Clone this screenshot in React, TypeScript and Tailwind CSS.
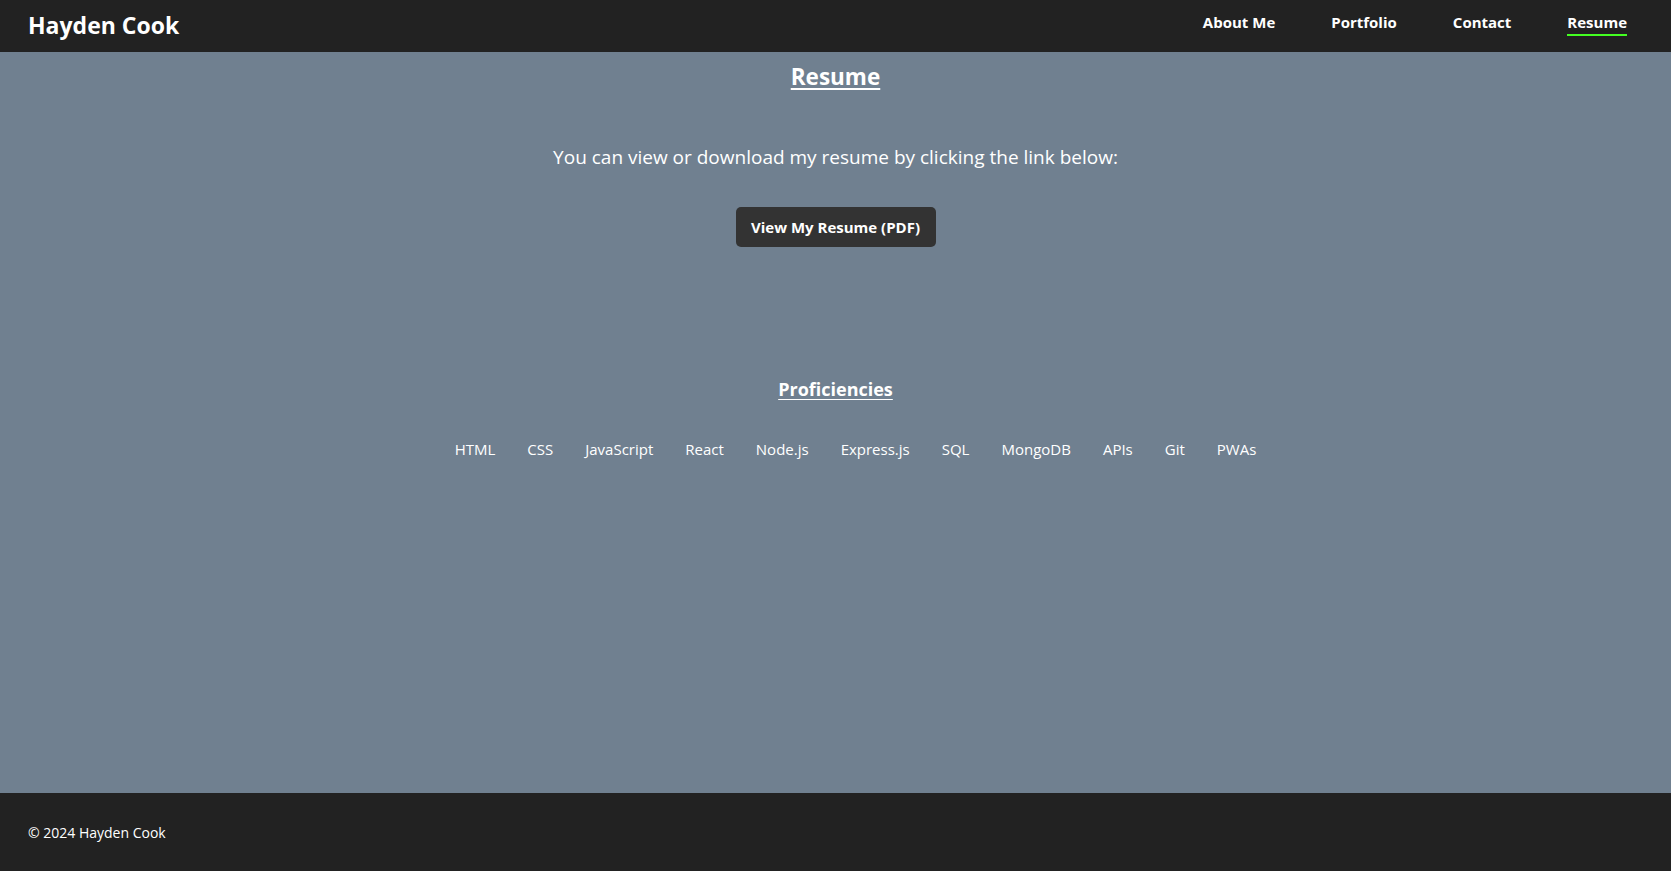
const navLinks = ["About Me", "Portfolio", "Contact", "Resume"];
const skills = ["HTML", "CSS", "JavaScript", "React", "Node.js", "Express.js", "SQL", "MongoDB", "APIs", "Git", "PWAs"];

function Header() {
  return (
    <header className="flex h-[52px] shrink-0 items-start justify-between bg-[#222222] pl-[28px] pr-[44px] text-white">
      <h1 className="mt-[11px] text-[23px] font-bold leading-[28px]">Hayden Cook</h1>
      <nav className="mt-[12px] flex items-start gap-[56px]">
        {navLinks.map((link) => {
          const active = link === "Resume";
          return (
            <a
              key={link}
              href="#"
              className={
                active
                  ? "border-b-2 border-[#44ff22] pb-[2px] text-[15px] font-bold leading-[20px]"
                  : "pb-[4px] text-[15px] font-bold leading-[20px]"
              }
            >
              {link}
            </a>
          );
        })}
      </nav>
    </header>
  );
}

export default function App() {
  return (
    <div className="flex h-screen flex-col font-['Open_Sans',sans-serif] text-white">
      <Header />
      <main className="flex flex-1 flex-col items-center bg-[#708090] text-center">
        <h2 className="mt-[9px] text-[22.5px] font-bold leading-[32px] underline underline-offset-[3px]">Resume</h2>
        <p className="mt-[50px] text-[19px] leading-[28px]">
          You can view or download my resume by clicking the link below:
        </p>
        <a
          href="#"
          className="mt-[36px] flex h-[40px] w-[200px] items-center justify-center rounded-[5px] bg-[#333333] text-[15px] font-bold"
        >
          View My Resume (PDF)
        </a>
        <h3 className="mt-[128px] text-[18px] font-bold leading-[28px] underline underline-offset-[3px]">Proficiencies</h3>
        <ul className="mt-[34px] flex gap-[32px] pl-[40px] text-[15px] leading-[24px]">
          {skills.map((s) => (
            <li key={s}>{s}</li>
          ))}
        </ul>
      </main>
      <footer className="flex h-[78px] shrink-0 items-center bg-[#222222] px-[28px] text-[14px]">
        <p>© 2024 Hayden Cook</p>
      </footer>
    </div>
  );
}
